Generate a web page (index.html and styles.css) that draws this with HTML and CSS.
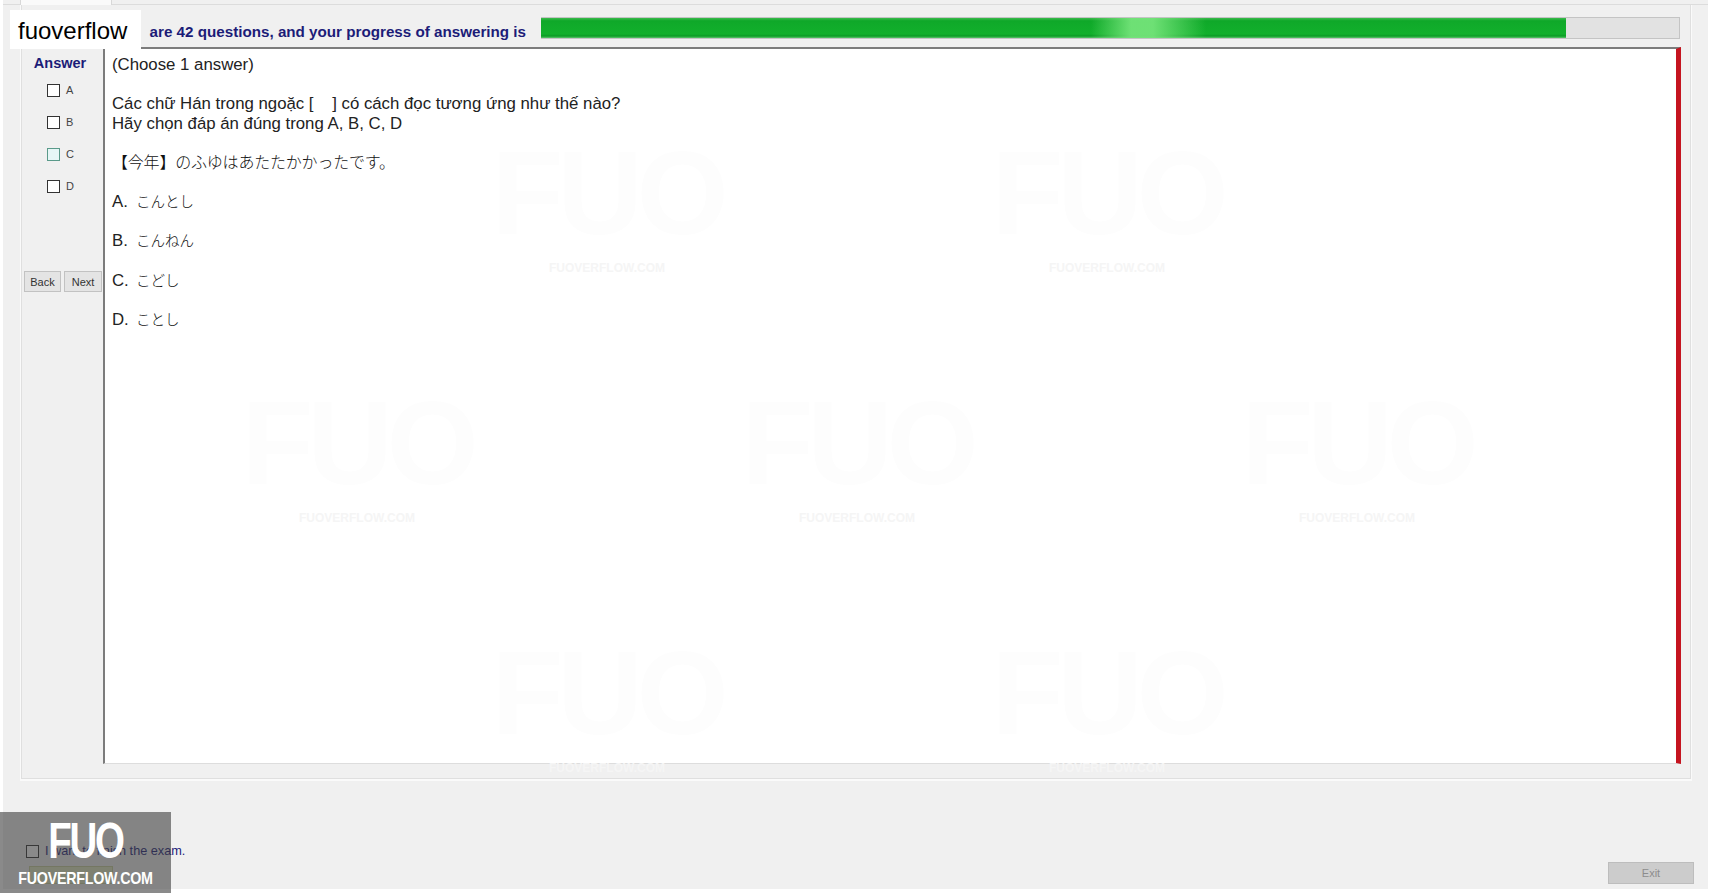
FILE: index.html
```html
<!DOCTYPE html>
<html lang="en">
  <head>
    <meta charset="utf-8" />
    <title>Exam</title>
    <link rel="stylesheet" href="styles.css">
  </head>
  <body>
    <div class="window">
      <div class="tab-strip"><div class="tab"></div></div>

      <div class="panel">
        <div class="progress-row">
          <span class="progress-text">are 42 questions, and your progress of answering is</span>
          <div class="progress-bar"><div class="progress-fill"></div></div>
        </div>

        <div class="exam-row">
          <div class="answer-col">
            <div class="answer-title">Answer</div>
            <label class="answer-opt"><span class="check"></span>A</label>
            <label class="answer-opt"><span class="check"></span>B</label>
            <label class="answer-opt"><span class="check check-focus"></span>C</label>
            <label class="answer-opt"><span class="check"></span>D</label>
            <div class="nav-btns">
              <button class="btn">Back</button>
              <button class="btn btn-next">Next</button>
            </div>
          </div>

          <div class="question-box">
            <p class="q-line q-choose">(Choose 1 answer)</p>
            <p class="q-line q-prompt">Các chữ Hán trong ngoặc [&nbsp;&nbsp;&nbsp;&nbsp;] có cách đọc tương ứng như thế nào?<br>Hãy chọn đáp án đúng trong A, B, C, D</p>
            <p class="q-line q-jp">【今年】のふゆはあたたかかったです。</p>
            <p class="q-line q-option"><span class="opt-key">A.</span><span class="jp">こんとし</span></p>
            <p class="q-line q-option"><span class="opt-key">B.</span><span class="jp">こんねん</span></p>
            <p class="q-line q-option"><span class="opt-key">C.</span><span class="jp">こどし</span></p>
            <p class="q-line q-option"><span class="opt-key">D.</span><span class="jp">ことし</span></p>

            <!-- faint watermarks -->
            <div class="wm wm-1">FUO<small>FUOVERFLOW.COM</small></div>
            <div class="wm wm-2">FUO<small>FUOVERFLOW.COM</small></div>
            <div class="wm wm-3">FUO<small>FUOVERFLOW.COM</small></div>
            <div class="wm wm-4">FUO<small>FUOVERFLOW.COM</small></div>
            <div class="wm wm-5">FUO<small>FUOVERFLOW.COM</small></div>
            <div class="wm wm-6">FUO<small>FUOVERFLOW.COM</small></div>
            <div class="wm wm-7">FUO<small>FUOVERFLOW.COM</small></div>
          </div>
        </div>
      </div>

      <div class="footer">
        <div class="finish-col">
          <label class="finish-check"><span class="check"></span>I want to finish the exam.</label>
          <button class="btn-finish"></button>
        </div>
        <button class="btn-exit">Exit</button>
      </div>
    </div>

    <div class="brand-tag">fuoverflow</div>
    <div class="brand-logo">
      <div class="brand-logo-mark">FUO</div>
      <div class="brand-logo-name">FUOVERFLOW.COM</div>
    </div>
  </body>
</html>
```

FILE: styles.css
```css
html,
body {
  margin: 0;
  height: 100%;
  overflow: hidden;
  background-color: #ffffff;
}

body {
  font-family: "Liberation Sans", Arial, sans-serif;
  color: #222222;
}

.window {
  display: flex;
  flex-direction: column;
  width: 1705px;
  height: 889px;
  margin-left: 3px;
  background-color: #f0f0f0;
}

.tab-strip {
  height: 5px;
  padding-left: 17px;
  border-bottom: 1px solid #dcdcdc;
  box-sizing: border-box;
}

.tab {
  width: 90px;
  height: 5px;
  background-color: #fafafa;
  border-right: 1px solid #d8d8d8;
  border-left: 1px solid #d8d8d8;
}

.panel {
  width: 1672px;
  height: 776px;
  margin-left: 17px;
  box-sizing: border-box;
  border-left: 1px solid #fafafa;
  border-right: 1px solid #fafafa;
  border-bottom: 2px solid #fafafa;
  box-shadow: inset 1px 0 0 #dfdfdf, inset -1px 0 0 #dfdfdf, inset 0 -1px 0 #dfdfdf;
  padding-left: 3px;
}

.progress-row {
  display: flex;
  align-items: center;
  height: 42px;
}

.progress-text {
  width: 502px;
  margin-right: 15px;
  text-align: right;
  white-space: nowrap;
  font-size: 15.2px;
  font-weight: bold;
  color: #1c1c78;
  padding-top: 10px;
}

.progress-bar {
  width: 1139px;
  height: 22px;
  margin-top: 4px;
  box-sizing: border-box;
  background-color: #e2e2e2;
  border: 1px solid #c4c4c4;
  border-left: 0;
}

.progress-fill {
  width: 1025px;
  height: 100%;
  background:
    linear-gradient(90deg, rgba(120, 230, 125, 0) 0, rgba(120, 230, 125, 0) 550px, rgba(120, 230, 125, .9) 590px, rgba(120, 230, 125, .9) 612px, rgba(120, 230, 125, 0) 665px),
    linear-gradient(180deg, #3dbb4e 0, #0fa829 14%, #12b02c 80%, #0b9c25 90%, #5bc76a 100%);
}

.exam-row {
  display: flex;
  height: 719px;
}

.answer-col {
  display: flex;
  flex-direction: column;
  width: 79px;
  flex-shrink: 0;
  box-sizing: border-box;
}

.answer-title {
  height: 37px;
  padding: 8px 7px 0 0;
  box-sizing: border-box;
  text-align: center;
  font-size: 14.5px;
  font-weight: bold;
  color: #1c1c78;
}

.answer-opt {
  display: flex;
  align-items: flex-start;
  gap: 6px;
  height: 32px;
  padding-left: 23px;
  font-size: 11px;
  color: #444444;
}

.check {
  display: inline-block;
  width: 13px;
  height: 13px;
  box-sizing: border-box;
  flex-shrink: 0;
  border: 1px solid #333333;
  background-color: #ffffff;
}

.check-focus {
  border-color: #5a9a8a;
  background-color: #e6f6f6;
}

.nav-btns {
  display: flex;
  gap: 3px;
  margin-top: 59px;
}

.btn {
  width: 37px;
  height: 21px;
  padding: 0;
  background-color: #e4e4e4;
  border: 1px solid #c2c2c2;
  font-family: "Liberation Sans", Arial, sans-serif;
  font-size: 11px;
  color: #333333;
}

.btn-next {
  width: 38px;
}

.question-box {
  position: relative;
  width: 1578px;
  height: 717px;
  box-sizing: border-box;
  padding: 6px 0 0 7px;
  background-color: #ffffff;
  border-top: 2px solid #7c7c7c;
  border-left: 2px solid #7c7c7c;
  border-right: 5px solid #c5141f;
  border-bottom: 1px solid #dddddd;
  font-size: 16.8px;
  line-height: 20px;
}

.q-line {
  position: relative;
  z-index: 1;
  margin: 0;
}

.q-choose {
  margin-bottom: 19px;
}

.q-prompt {
  margin-bottom: 17px;
}

.q-jp {
  margin-bottom: 19.5px;
  font-family: "Noto Sans CJK JP", sans-serif;
  font-size: 16px;
  font-weight: 300;
  letter-spacing: -.2px;
  color: #111111;
}

.q-option {
  margin-bottom: 18.5px;
}

.opt-key {
  display: inline-block;
  width: 24px;
}

.jp {
  font-family: "Noto Sans CJK JP", sans-serif;
  font-size: 14.5px;
  font-weight: 300;
  color: #111111;
}

/* watermarks, placed relative to the question box */
.wm {
  position: absolute;
  width: 260px;
  text-align: center;
  font-size: 118px;
  line-height: 110px;
  font-weight: bold;
  letter-spacing: -6px;
  color: #fdfdfd;
}

.wm small {
  display: block;
  font-size: 12px;
  line-height: 16px;
  letter-spacing: 0;
  margin-top: 12px;
  color: #f5f5f5;
}

.wm-1 { left: 372px; top: 89px; }
.wm-2 { left: 872px; top: 89px; }
.wm-3 { left: 122px; top: 339px; }
.wm-4 { left: 622px; top: 339px; }
.wm-5 { left: 1122px; top: 339px; }
.wm-6 { left: 372px; top: 589px; }
.wm-7 { left: 872px; top: 589px; }

.footer {
  flex: 1;
  display: flex;
  justify-content: space-between;
  align-items: flex-end;
  padding: 0 14px 5px 23px;
}

.finish-col {
  display: flex;
  flex-direction: column;
  gap: 8px;
}

.finish-check {
  display: flex;
  align-items: center;
  gap: 6px;
  font-size: 12.7px;
  color: #1c1c78;
}

.btn-finish {
  width: 84px;
  height: 18px;
  margin-left: 3px;
  padding: 0;
  background-color: #e2e8c0;
  border: 1px solid #c8cf9c;
}

.btn-exit {
  width: 86px;
  height: 22px;
  padding: 0;
  background-color: #cccccc;
  border: 1px solid #bdbdbd;
  font-family: "Liberation Sans", Arial, sans-serif;
  font-size: 11px;
  color: #8c8c8c;
}

/* overlays stamped on top of the screenshot */
.brand-tag {
  position: absolute;
  left: 10px;
  top: 10px;
  width: 131px;
  height: 39px;
  box-sizing: border-box;
  padding-left: 8px;
  background-color: #ffffff;
  font-size: 24px;
  line-height: 42px;
  color: #000000;
}

.brand-logo {
  position: absolute;
  left: 0;
  top: 812px;
  width: 171px;
  height: 81px;
  background-color: rgba(60, 60, 60, .6);
  color: #ffffff;
  text-align: center;
  font-weight: bold;
}

.brand-logo-mark {
  margin-top: 6px;
  font-size: 50px;
  line-height: 46px;
  letter-spacing: -3px;
  transform: scaleX(.77);
}

.brand-logo-name {
  margin-top: 6px;
  font-size: 17px;
  line-height: 18px;
  letter-spacing: -.3px;
  transform: scaleX(.84);
}
```
